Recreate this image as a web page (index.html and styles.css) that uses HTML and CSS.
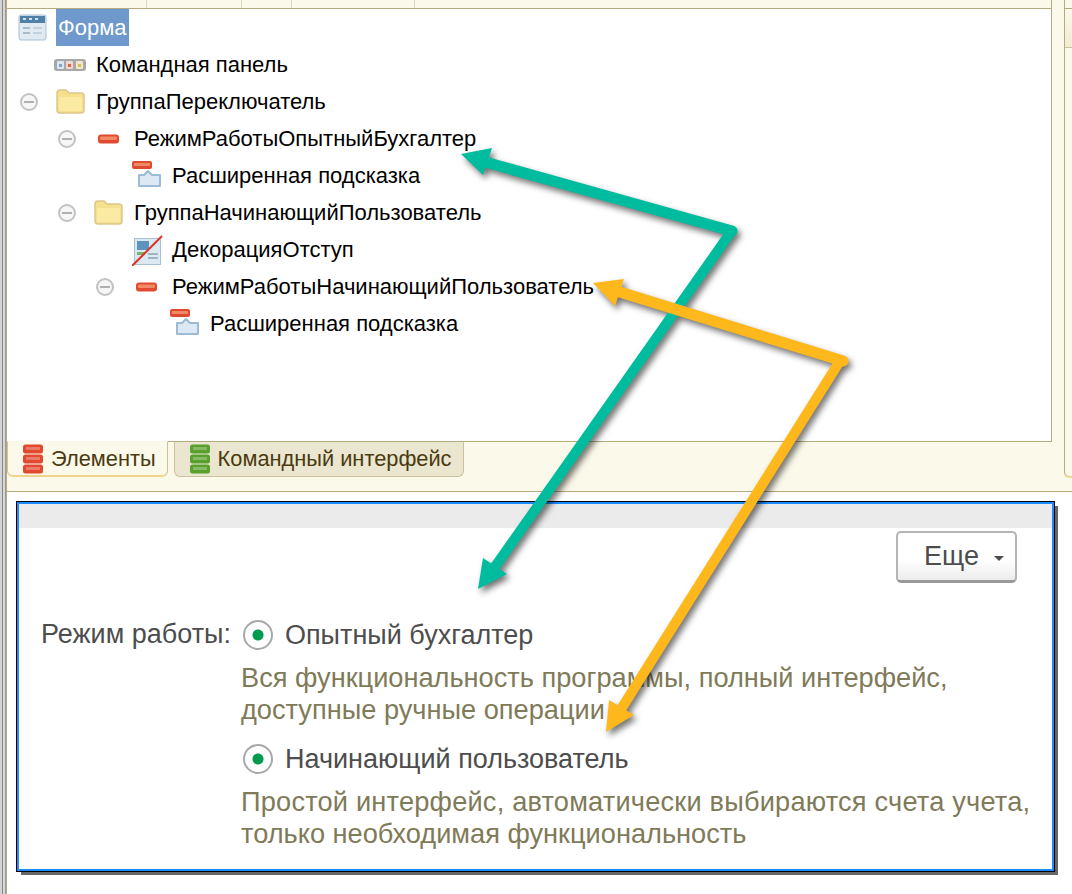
FILE: index.html
```html
<!DOCTYPE html>
<html lang="ru">
<head>
    <meta charset="UTF-8">
    <title>Форма</title>
    <link rel="stylesheet" href="styles.css">
</head>
<body>
    <div class="page">
        <div class="designer">
            <div class="main">
                <div class="head">
                    <span class="hcol c1"></span><span class="hcol c2"></span><span class="hcol c3"></span><span class="hcol c4"></span>
                </div>
                <div class="tree">
                    <div class="row">
                        <svg class="ic form-ic" width="30" height="28" viewBox="0 0 30 28">
                            <rect x="1" y="1" width="27" height="25" rx="2" fill="#dfeaf3" stroke="#a9c0d2"/>
                            <rect x="2" y="2" width="25" height="7" fill="#4f80a8"/>
                            <rect x="5" y="4" width="3" height="2" fill="#cfe0ee"/><rect x="11" y="4" width="3" height="2" fill="#cfe0ee"/><rect x="17" y="4" width="3" height="2" fill="#cfe0ee"/>
                            <rect x="5" y="13" width="7" height="2" fill="#a8bccb"/><rect x="15" y="13" width="9" height="2" fill="#c3d2dd"/>
                            <rect x="5" y="18" width="7" height="2" fill="#a8bccb"/><rect x="15" y="18" width="9" height="2" fill="#c3d2dd"/>
                        </svg>
                        <span class="name sel">Форма</span>
                    </div>
                    <div class="row lv1">
                        <span class="tog none"></span>
                        <svg class="ic cmd-ic" width="34" height="14" viewBox="0 0 34 14">
                            <rect x="0" y="1" width="32" height="12" rx="3" fill="#a8a8a8"/>
                            <rect x="3" y="3" width="7" height="8" rx="1" fill="#dde5ed"/><rect x="12" y="3" width="7" height="8" rx="1" fill="#f0d8ce"/><rect x="22" y="3" width="7" height="8" rx="1" fill="#f0e8c8"/>
                            <rect x="5" y="6" width="3" height="3" fill="#7fa8d2"/><rect x="14" y="6" width="3" height="3" fill="#e4644a"/><rect x="24" y="6" width="3" height="3" fill="#dfbc50"/>
                        </svg>
                        <span class="name">Командная панель</span>
                    </div>
                    <div class="row lv1">
                        <span class="tog"></span>
                        <svg class="ic" width="32" height="26" viewBox="0 0 32 26"><use href="#folder"/></svg>
                        <span class="name">ГруппаПереключатель</span>
                    </div>
                    <div class="row lv2">
                        <span class="tog"></span>
                        <svg class="ic" width="32" height="12" viewBox="0 0 32 12"><use href="#field"/></svg>
                        <span class="name">РежимРаботыОпытныйБухгалтер</span>
                    </div>
                    <div class="row lv3">
                        <span class="tog none"></span>
                        <svg class="ic" width="32" height="30" viewBox="0 0 32 30"><use href="#hint"/></svg>
                        <span class="name">Расширенная подсказка</span>
                    </div>
                    <div class="row lv2">
                        <span class="tog"></span>
                        <svg class="ic" width="32" height="26" viewBox="0 0 32 26"><use href="#folder"/></svg>
                        <span class="name">ГруппаНачинающийПользователь</span>
                    </div>
                    <div class="row lv3">
                        <span class="tog none"></span>
                        <svg class="ic" width="32" height="32" viewBox="0 0 32 32">
                            <rect x="2.5" y="4.5" width="26" height="26" fill="#dce8f2" stroke="#a9c0d2"/>
                            <rect x="5" y="7" width="12" height="9" fill="#5f93c0"/>
                            <rect x="5" y="18" width="8" height="3" fill="#7fb069"/>
                            <rect x="16" y="19" width="10" height="2" fill="#9fb3c2"/><rect x="16" y="23" width="10" height="2" fill="#9fb3c2"/>
                            <path d="M0 32 L30 2" stroke="#d8342a" stroke-width="2"/>
                        </svg>
                        <span class="name">ДекорацияОтступ</span>
                    </div>
                    <div class="row lv3">
                        <span class="tog"></span>
                        <svg class="ic" width="32" height="12" viewBox="0 0 32 12"><use href="#field"/></svg>
                        <span class="name">РежимРаботыНачинающийПользователь</span>
                    </div>
                    <div class="row lv4">
                        <span class="tog none"></span>
                        <svg class="ic" width="32" height="30" viewBox="0 0 32 30"><use href="#hint"/></svg>
                        <span class="name">Расширенная подсказка</span>
                    </div>
                </div>
                <div class="tabs">
                    <div class="tab active">
                        <svg class="ic" width="22" height="30" viewBox="0 0 22 30">
                            <use href="#stack" fill="#e2492e"/>
                        </svg>
                        Элементы
                    </div>
                    <div class="tab">
                        <svg class="ic" width="22" height="30" viewBox="0 0 22 30">
                            <use href="#stack" fill="#5aa02c"/>
                        </svg>
                        Командный интерфейс
                    </div>
                </div>
            </div>
            <div class="side">
                <div class="side-head"></div>
                <div class="side-tab"></div>
                <div class="side-active"></div>
            </div>
        </div>

        <div class="preview">
            <div class="preview-bar"></div>
            <div class="actions">
                <button class="more">Еще<span class="caret"></span></button>
            </div>
            <div class="modes">
                <div class="mode-label">Режим работы:</div>
                <div class="mode-list">
                    <div class="radio-row"><span class="radio"></span>Опытный бухгалтер</div>
                    <div class="hint">Вся функциональность программы, полный интерфейс,<br>доступные ручные операции</div>
                    <div class="radio-row"><span class="radio"></span>Начинающий пользователь</div>
                    <div class="hint"><span class="wide">Простой интерфейс, автоматически выбираются счета учета,</span><br>только необходимая функциональность</div>
                </div>
            </div>
        </div>

        <!-- стрелки поверх скриншота -->
        <svg class="arrows" width="1072" height="894" viewBox="0 0 1072 894">
            <g class="arrow-shadow">
                <path d="M731 232 L492 571" stroke="#00bc9f" stroke-width="10" stroke-linecap="round"/>
                <path d="M478 589 L483 558 L507 574 Z" fill="#00bc9f"/>
                <path d="M732 231 L478 160" stroke="#00bc9f" stroke-width="11" stroke-linecap="round"/>
                <path d="M461 154 L492 148 L483 175 Z" fill="#00bc9f"/>
                <path d="M838 364 L618 714" stroke="#ffb81c" stroke-width="10" stroke-linecap="round"/>
                <path d="M606 732 L609 700 L634 715 Z" fill="#ffb81c"/>
                <path d="M843 361 L610 289" stroke="#ffb81c" stroke-width="11" stroke-linecap="round"/>
                <path d="M593 283 L624 279 L615 306 Z" fill="#ffb81c"/>
            </g>
        </svg>
    </div>

    <svg class="defs" width="0" height="0">
        <defs>
            <g id="folder">
                <path d="M1 4 Q1 1 4 1 H10 L13 4 H25 Q28 4 28 7 V21 Q28 24 25 24 H4 Q1 24 1 21 Z" fill="#f6e08e" stroke="#dcc68c" stroke-width="1.5"/>
                <rect x="3" y="8" width="23" height="14" rx="1" fill="#fbeaa4"/>
            </g>
            <g id="field">
                <rect x="4" y="1.5" width="21" height="9" rx="3" fill="#df4a30"/>
                <rect x="6" y="3.5" width="17" height="3.5" rx="1" fill="#f28a66"/>
            </g>
            <g id="hint">
                <rect x="0" y="0" width="20" height="8" rx="2" fill="#df4a30"/>
                <rect x="2" y="2" width="16" height="3" fill="#f08a66"/>
                <path d="M7 14 H12 L16 10 L20 14 H28 V25 H7 Z" fill="#dce9f4" stroke="#9dbbd4" stroke-width="2" stroke-linejoin="round"/>
            </g>
            <g id="stack">
                <rect x="1" y="0.5" width="20" height="9" rx="2.5"/>
                <rect x="4" y="3" width="14" height="3" fill="#fff" opacity=".28"/>
                <rect x="1" y="10.5" width="20" height="9" rx="2.5"/>
                <rect x="4" y="13" width="14" height="3" fill="#fff" opacity=".28"/>
                <rect x="1" y="20.5" width="20" height="9" rx="2.5"/>
                <rect x="4" y="23" width="14" height="3" fill="#fff" opacity=".28"/>
            </g>
        </defs>
    </svg>
</body>
</html>
```

FILE: styles.css
```css
body{
    margin: 0;
    background: #fff;
    font-family: "Liberation Sans", Arial, sans-serif;
}
.page{
    position: relative;
    width: 1072px;
    height: 894px;
    box-sizing: border-box;
    padding-left: 7px;
    overflow: hidden;
    background: linear-gradient(90deg,#d4d4d4 0 2px,#858585 2px 3px,#d8d8d8 3px 5px,#9a9a9a 5px 6px,#b5ab80 6px 7px,#fff 7px);
}
.defs{
    position: absolute;
}
.designer{
    display: flex;
    height: 492px;
    box-sizing: border-box;
    background: #fbf9ea;
    border-bottom: 1px solid #b5ab80;
}
.main{
    width: 1045px;
    flex: none;
}
.head{
    height: 9px;
    box-sizing: border-box;
    display: flex;
    border-bottom: 1px solid #b5ab80;
    border-right: 1px solid #b5ab80;
}
.hcol{
    box-sizing: border-box;
    border-right: 1px solid #dcd8c0;
}
.c1{ width: 140px; }
.c2{ width: 95px; }
.c3{ width: 50px; }
.c4{ width: 123px; }
.tree{
    height: 433px;
    box-sizing: border-box;
    background: #fff;
    border-right: 1px solid #b5ab80;
    border-bottom: 1px solid #b5ab80;
    padding-left: 11px;
}
.row{
    display: flex;
    align-items: center;
    height: 37px;
    font-size: 22px;
    color: #000;
}
.tog{
    width: 18px;
    height: 18px;
    box-sizing: border-box;
    border: 2px solid #c2c2c2;
    border-radius: 50%;
    margin-right: 18px;
    flex: none;
    background: linear-gradient(#b0b0b0,#b0b0b0) center/10px 2px no-repeat #f6f6f6;
}
.tog.none{
    visibility: hidden;
}
.ic{
    flex: none;
    filter: blur(.5px);
}
.row svg{
    margin-right: 8px;
}
.row .cmd-ic{
    margin-left: -2px;
}
.lv1{ padding-left: 2px; }
.lv2{ padding-left: 40px; }
.lv3{ padding-left: 78px; }
.lv4{ padding-left: 116px; }
.name{
    white-space: nowrap;
}
.sel{
    background: #6f98cc;
    color: #fff;
    line-height: 37px;
    padding: 0 2px;
}
.tabs{
    display: flex;
    gap: 6px;
    margin-top: -1px;
}
.tab{
    height: 36px;
    box-sizing: border-box;
    display: flex;
    align-items: center;
    gap: 7px;
    padding: 0 11px 0 14px;
    font-size: 21.8px;
    color: #4a3a10;
    background: #ebe6cf;
    border: 1px solid #c9c29c;
    border-top-color: #b5ab80;
    border-radius: 0 0 6px 6px;
}
.tab.active{
    background: #fbf9ea;
    border-top-color: #fbf9ea;
    border-bottom: 2px solid #f0d48a;
}
.side{
    margin-left: 12px;
    width: 8px;
    height: 478px;
    box-sizing: border-box;
    border-left: 1px solid #b5ab80;
    border-radius: 0 0 0 6px;
}
.side-head{
    height: 9px;
    box-sizing: border-box;
    border-bottom: 1px solid #b5ab80;
}
.side-tab{
    height: 39px;
    box-sizing: border-box;
    background: linear-gradient(#fbf9ea,#f1ecd2);
    border-bottom: 1px solid #c9c29c;
}
.side-active{
    height: 430px;
    box-sizing: border-box;
    border-bottom: 2px solid #f0d48a;
    border-radius: 0 0 0 6px;
}
.preview{
    position: relative;
    margin: 10px 0 0 10px;
    width: 1037px;
    height: 369px;
    box-sizing: border-box;
    background: #fff;
    border: 2px solid #1a8cff;
    outline: 1px solid #000;
    box-shadow: 4px 4px 0 #666;
}
.preview-bar{
    height: 24px;
    background: #ebebeb;
}
.actions{
    display: flex;
    justify-content: flex-end;
    padding: 3px 35px 0 0;
}
.more{
    display: flex;
    align-items: center;
    width: 121px;
    height: 52px;
    box-sizing: border-box;
    background: linear-gradient(#fff 55%,#ececec);
    border: 2px solid #b5b5b5;
    border-bottom: 3px solid #999;
    border-radius: 5px;
    font: 27px "Liberation Sans", Arial, sans-serif;
    color: #4d4d4d;
    padding: 0 0 0 26px;
}
.caret{
    border: 5px solid transparent;
    border-top: 5px solid #4d4d4d;
    border-bottom: 0;
    margin: 3px 0 0 15px;
}
.modes{
    display: flex;
    font-size: 27px;
    color: #4d4d4d;
    padding: 30px 0 0 22px;
}
.mode-label{
    width: 202px;
    flex: none;
    line-height: 42px;
}
.radio-row{
    display: flex;
    align-items: center;
    height: 44px;
}
.radio{
    width: 30px;
    height: 30px;
    box-sizing: border-box;
    border: 2px solid #a8a8a8;
    border-radius: 50%;
    margin-right: 12px;
    background: radial-gradient(circle,#009a4e 5px,#fff 6px);
}
.hint{
    color: #7f7a58;
    font-size: 27.2px;
    line-height: 32px;
    white-space: nowrap;
    margin: 5px 0 11px -2px;
}
.wide{
    letter-spacing: .2px;
}
.arrows{
    position: absolute;
    left: 0;
    top: 0;
    pointer-events: none;
}
.arrow-shadow{
    filter: drop-shadow(3px 4px 3px rgba(0,0,0,.55));
}
```
